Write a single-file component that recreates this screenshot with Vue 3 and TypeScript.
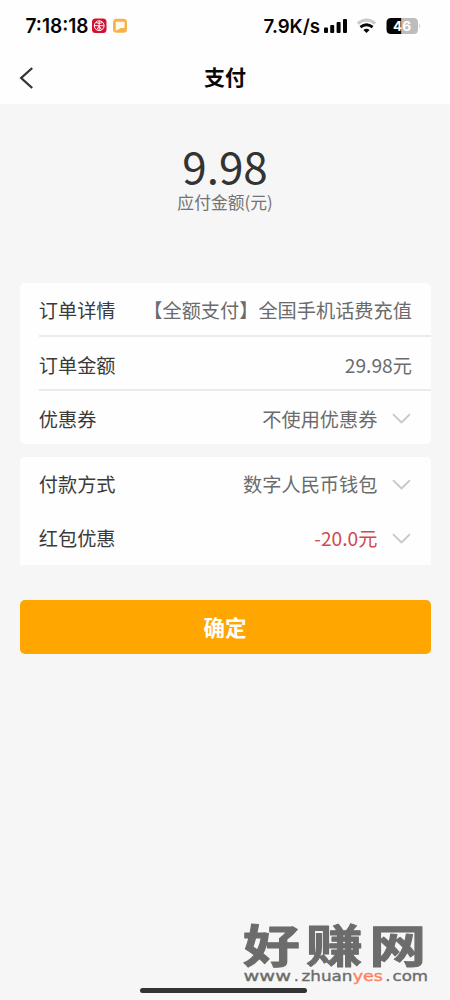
<script setup lang="ts">
interface Row {
  label: string
  value: string
  arrow?: boolean
  accent?: boolean
}

const orderRows: Row[] = [
  { label: '订单详情', value: '【全额支付】全国手机话费充值' },
  { label: '订单金额', value: '29.98元' },
  { label: '优惠券', value: '不使用优惠券', arrow: true },
]
const payRows: Row[] = [
  { label: '付款方式', value: '数字人民币钱包', arrow: true },
  { label: '红包优惠', value: '-20.0元', arrow: true, accent: true },
]
</script>

<template>
  <div class="screen">
    <header class="top">
      <svg class="status" width="450" height="52" viewBox="0 0 450 52">
        <text class="clock" x="25.5" y="32.5" textLength="63" lengthAdjust="spacingAndGlyphs">7:18:18</text>
        <rect x="92" y="18.5" width="14.5" height="14.5" rx="3.5" fill="#cf1231" />
        <g fill="none" stroke="#fff" stroke-width="1">
          <circle cx="99.2" cy="25.7" r="4.9" />
          <path d="M99.200 21v9.500M94.500 25.700h9.400M96 22.500q3.200 2 6.400 0M97 29.500l2.200-3.500l2.200 3.500" />
        </g>
        <rect x="113" y="18.8" width="14" height="14" rx="3.5" fill="#f8b24b" />
        <path d="M115.800 21.800h8.800v5.200q0 1-1 1h-2.600l-5.200 2.800z" fill="#fff8e8" />
        <text class="speed" x="263.5" y="33" textLength="56.5" lengthAdjust="spacingAndGlyphs">7.9K/s</text>
        <g fill="#050505">
          <rect x="324" y="27.5" width="4" height="5.5" rx="1" />
          <rect x="330.2" y="25" width="4" height="8" rx="1" />
          <rect x="336.6" y="22" width="4" height="11" rx="1" />
          <rect x="343" y="19" width="4" height="14" rx="1" />
        </g>
        <g fill="none" stroke-width="2.8">
          <path d="M357.8 23.6Q366.5 16.4 375.2 23.6" stroke="#c9c9c9" />
          <path d="M360.4 27.2Q366.5 22.3 372.6 27.2" stroke="#080808" />
        </g>
        <path d="M363.4 30Q366.5 27.6 369.6 30L366.5 33z" fill="#080808" />
        <path d="M391 18h10.5v16H391q-4.500 0-4.500-4.500v-7Q386.500 18 391 18z" fill="#050505" />
        <path d="M401.500 18H413.500q4.500 0 4.500 4.500v7q0 4.500-4.500 4.500H401.500z" fill="#bdbdbd" />
        <path d="M419.200 23.500q1.800 2.300 0 4.800z" fill="#bdbdbd" />
        <text class="level" x="393" y="30.5" textLength="18" lengthAdjust="spacingAndGlyphs">46</text>
      </svg>
      <div class="nav">
        <svg class="back" width="17" height="24" viewBox="0 0 17 24">
          <path d="M14.200 2L3.200 12l11 10" fill="none" stroke="#333" stroke-width="2.300" />
        </svg>
        <h1>支付</h1>
      </div>
    </header>

    <section class="amount">
      <strong>9.98</strong>
      <span>应付金额(元)</span>
    </section>

    <section class="card ruled">
      <div v-for="row in orderRows" :key="row.label" class="row">
        <span class="label">{{ row.label }}</span>
        <span class="value">{{ row.value }}</span>
        <svg v-if="row.arrow" class="arrow" width="19" height="11" viewBox="0 0 19 11">
          <path d="M1 1.200l8.500 8.300L18 1.200" />
        </svg>
      </div>
    </section>

    <section class="card second">
      <div v-for="row in payRows" :key="row.label" class="row">
        <span class="label">{{ row.label }}</span>
        <span class="value" :class="{ accent: row.accent }">{{ row.value }}</span>
        <svg v-if="row.arrow" class="arrow" width="19" height="11" viewBox="0 0 19 11">
          <path d="M1 1.200l8.500 8.300L18 1.200" />
        </svg>
      </div>
    </section>

    <button class="confirm" type="button">确定</button>

    <svg class="watermark" width="220" height="110" viewBox="0 -20 220 110">
      <g class="brand" transform="translate(0 53) scale(1.250 1)">
        <text x="10.400" y="0">好</text>
        <text x="60.900" y="0">赚</text>
        <text x="111.400" y="0">网</text>
      </g>
      <g class="site">
        <text x="13.5" y="71" textLength="47.5" lengthAdjust="spacingAndGlyphs">www</text>
        <text x="64" y="71">.</text>
        <text x="71.5" y="71" textLength="51" lengthAdjust="spacingAndGlyphs">zhuan</text>
        <text class="hot" x="122.7" y="71" textLength="30.3" lengthAdjust="spacingAndGlyphs">yes</text>
        <text x="155.5" y="71">.</text>
        <text x="162.5" y="71" textLength="35.5" lengthAdjust="spacingAndGlyphs">com</text>
      </g>
    </svg>
    <div class="home-bar"></div>
  </div>
</template>

<style>
body {
  margin: 0;
  background: #f6f6f6;
}
</style>

<style scoped>
.screen {
  position: relative;
  width: 450px;
  height: 1000px;
  overflow: hidden;
  background: #f6f6f6;
  font-family: "Noto Sans CJK SC", sans-serif;
  color: #3a3a3a;
}
.top {
  height: 104px;
  background: #fefefe;
}
.status {
  display: block;
}
.clock {
  font: 600 20px Inter, sans-serif;
  fill: #050505;
}
.speed {
  font: 600 19px Inter, sans-serif;
  fill: #050505;
}
.level {
  font: 700 13px Inter, sans-serif;
  fill: #fff;
}
.nav {
  height: 51px;
  display: grid;
  grid-template-columns: 48px 1fr 48px;
  align-items: center;
}
.back {
  margin-left: 18px;
}
h1 {
  margin: 0 0 3px;
  text-align: center;
  font-size: 21px;
  line-height: 30px;
  font-weight: 700;
  color: #080808;
}
.amount {
  height: 179px;
  box-sizing: border-box;
  padding-top: 37px;
  display: flex;
  flex-direction: column;
  align-items: center;
}
.amount strong {
  font-size: 44px;
  line-height: 49px;
  font-weight: 400;
  color: #333;
}
.amount span {
  font-size: 16.8px;
  line-height: 24px;
  color: #737373;
}
.card {
  margin: 0 19.5px;
  border-radius: 5px;
  background: #fefefe;
}
.row {
  height: 53.8px;
  box-sizing: border-box;
  margin-left: 19.3px;
  padding-right: 18.6px;
  display: flex;
  align-items: center;
  font-size: 19.2px;
  line-height: 28px;
  white-space: nowrap;
}
.ruled .row:first-child {
  height: 52.4px;
  padding-top: 1px;
}
.ruled .row + .row {
  height: 54px;
  border-top: 2px solid #ebebeb;
}
.ruled .row:nth-child(2) {
  padding-top: 3.4px;
}
.ruled .row:last-child {
  height: 55.1px;
  padding-top: 1.5px;
}
.label {
  margin-right: auto;
}
.value {
  color: #6b6b6b;
}
.accent {
  color: #cf4951;
}
.arrow {
  margin-left: 14.5px;
  margin-right: 1px;
  fill: none;
  stroke: #c7c7c7;
  stroke-width: 1.8px;
}
.second {
  margin-top: 12.8px;
  border-radius: 5px 5px 0 0;
}
.second .row:last-child {
  padding-top: 0.8px;
}
.confirm {
  display: block;
  width: 411px;
  height: 54px;
  margin: 35.5px 19.5px 0;
  padding: 0;
  border: 0;
  border-radius: 5px;
  background: #ffa600;
  color: #fff;
  font-family: inherit;
  font-size: 21.5px;
  line-height: 30px;
  font-weight: 700;
}
.watermark {
  position: absolute;
  left: 230px;
  top: 890px;
}
.brand {
  font: 700 45.5px "Noto Sans CJK SC", sans-serif;
  fill: #6c6c6c;
  stroke: #6c6c6c;
  stroke-width: 1px;
  stroke-linejoin: round;
}
.site {
  font: 500 14.5px "DejaVu Sans", sans-serif;
  fill: #6c6c6c;
  stroke: #6c6c6c;
  stroke-width: 0.35px;
}
.site .hot {
  fill: #ff805e;
  stroke: #ff805e;
}
.home-bar {
  position: absolute;
  left: 140px;
  top: 988px;
  width: 167px;
  height: 5px;
  border-radius: 3px;
  background: #333;
}
</style>
